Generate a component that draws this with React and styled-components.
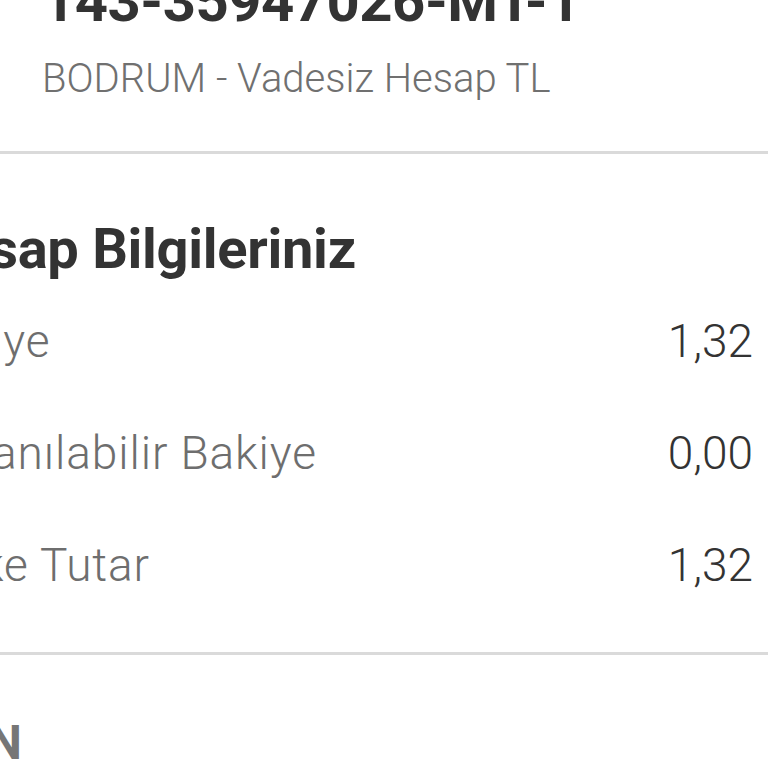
import React from "react";
import styled, { createGlobalStyle } from "styled-components";

const GlobalStyle = createGlobalStyle`
  html, body {
    margin: 0;
    padding: 0;
    background: #ffffff;
  }
  body {
    font-family: Roboto, "Noto Sans", Arial, sans-serif;
  }
`;

// Hesap detay ekranı (yakınlaştırılmış görünüm)
const Screen = styled.div`
  width: 768px;
  height: 768px;
  overflow: hidden;
  background: #fff;
`;

const Content = styled.div`
  margin-top: -28px;
`;

const Header = styled.header`
  padding-left: 42px;
  padding-bottom: 52px;
`;

const AccountNo = styled.h1`
  margin: 0;
  font-size: 58px;
  line-height: 58px;
  font-weight: 700;
  color: #333333;
  letter-spacing: -0.5px;
`;

const AccountName = styled.p`
  margin: 29px 0 0;
  font-size: 40px;
  line-height: 40px;
  font-weight: 300;
  color: #707070;
`;

const Divider = styled.hr`
  margin: 0;
  border: 0;
  height: 3px;
  background: #dadada;
`;

const Section = styled.section`
  margin-left: -80px;
  padding: ${(p) => p.$top}px 15px ${(p) => p.$bottom}px 0;
`;

const SectionTitle = styled.h2`
  margin: 0;
  font-size: 56px;
  line-height: 56px;
  font-weight: 700;
  color: #333333;
  letter-spacing: -0.3px;
`;

const List = styled.div`
  display: flex;
  flex-direction: column;
  gap: 66px;
  margin-top: 41px;
`;

const Row = styled.div`
  display: flex;
  justify-content: space-between;
  align-items: baseline;
  line-height: 46px;
`;

const Label = styled.span`
  margin-left: -6px;
  font-size: 46px;
  font-weight: 300;
  color: #6e6e6e;
  letter-spacing: 0.9px;
`;

const Value = styled.span`
  font-size: 46px;
  font-weight: 300;
  color: #333333;
`;

const SubTitle = styled.h3`
  margin: 0;
  font-size: 48px;
  line-height: 48px;
  font-weight: 700;
  color: #767676;
  letter-spacing: -3px;
`;

const rows = [
  { label: "Bakiye", value: "1,32" },
  { label: "Kullanılabilir Bakiye", value: "0,00" },
  { label: "Bloke Tutar", value: "1,32" },
];

function App() {
  return (
    <Screen>
      <GlobalStyle />
      <Content>
        <Header>
          <AccountNo>143-35947026-MT-1</AccountNo>
          <AccountName>BODRUM - Vadesiz Hesap TL</AccountName>
        </Header>
        <Divider />
        <Section $top={67} $bottom={64}>
          <SectionTitle>Hesap Bilgileriniz</SectionTitle>
          <List>
            {rows.map((r) => (
              <Row key={r.label}>
                <Label>{r.label}</Label>
                <Value>{r.value}</Value>
              </Row>
            ))}
          </List>
        </Section>
        <Divider />
        <Section $top={64} $bottom={40}>
          <SubTitle>IBAN</SubTitle>
        </Section>
      </Content>
    </Screen>
  );
}

export default App;
